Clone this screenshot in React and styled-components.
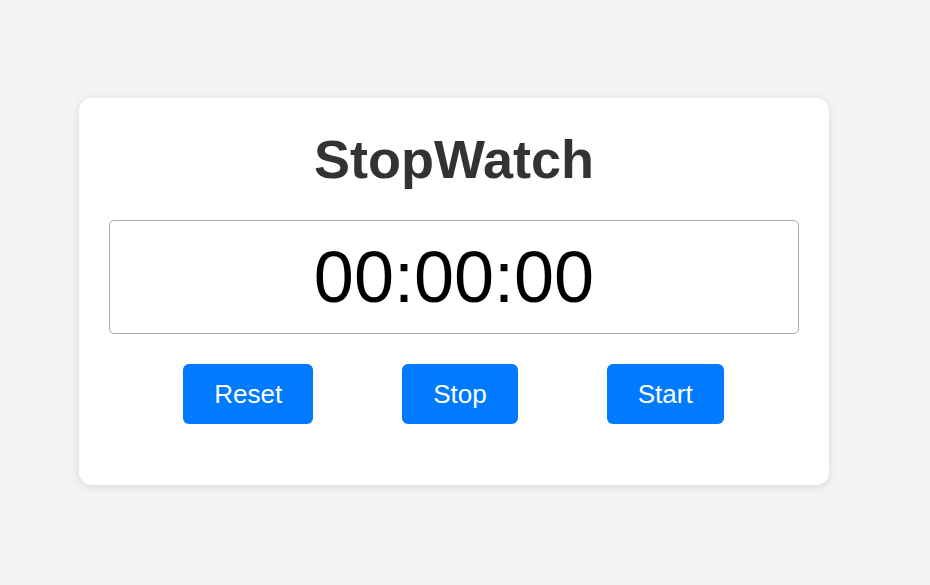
import React from "react";
import styled, { createGlobalStyle } from "styled-components";

const Global = createGlobalStyle`
  html, body { margin: 0; padding: 0; background: #f4f4f4; }
  body { font-family: "Liberation Sans", Arial, sans-serif; }
`;

const Page = styled.div`
  min-height: 585px;
  display: flex;
  align-items: center;
  justify-content: center;
  padding: 0 22px 2px 0;
  box-sizing: border-box;
`;

const Card = styled.div`
  width: 750px;
  box-sizing: border-box;
  background: #fff;
  border-radius: 13px;
  box-shadow: 0 2px 10px rgba(0, 0, 0, 0.12);
  padding: 30px 30px 61px;
  display: flex;
  flex-direction: column;
  align-items: center;
`;

const Title = styled.h1`
  margin: 0 0 30px;
  font-size: 54px;
  font-weight: 700;
  color: #333;
`;

const Display = styled.div`
  width: 100%;
  box-sizing: border-box;
  border: 1px solid #aaa;
  border-radius: 5px;
  padding: 15px;
  font-size: 72px;
  text-align: center;
  color: #000;
  margin-bottom: 30px;
`;

const Controls = styled.div`
  display: flex;
  justify-content: center;
  gap: 89px;
  padding-right: 1px;
`;

const Button = styled.button`
  font-family: "Liberation Sans", Arial, sans-serif;
  font-size: 26px;
  color: #fff;
  background: #007bff;
  border: none;
  border-radius: 6px;
  padding: 15px 31px;
  line-height: 30px;
  cursor: pointer;
`;

export default function App() {
  return (
    <>
      <Global />
      <Page>
        <Card>
          <Title>StopWatch</Title>
          <Display>00:00:00</Display>
          <Controls>
            <Button>Reset</Button>
            <Button>Stop</Button>
            <Button>Start</Button>
          </Controls>
        </Card>
      </Page>
    </>
  );
}
